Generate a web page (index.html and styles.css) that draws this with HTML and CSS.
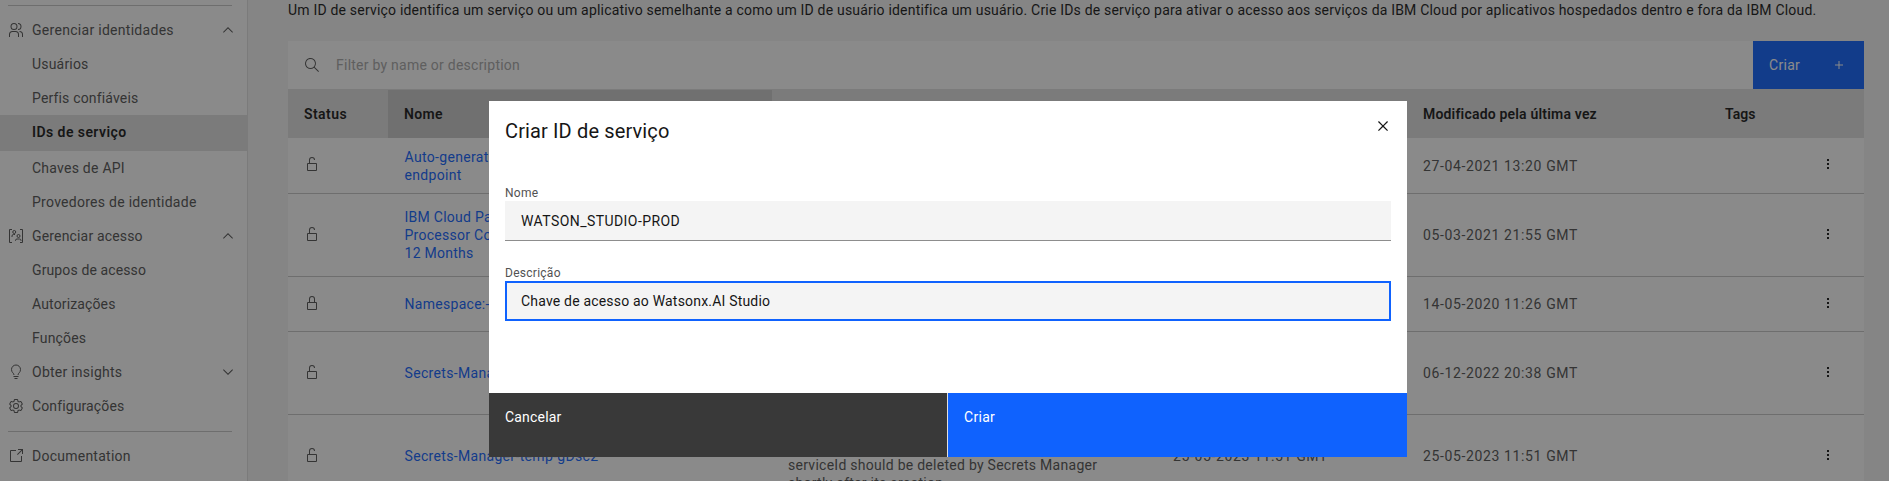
FILE: index.html
```html
<!DOCTYPE html>
<html lang="pt-BR">
<head>
<meta charset="utf-8">
<title>IDs de serviço</title>
<link rel="stylesheet" href="styles.css">
</head>
<body>
<svg class="defs" aria-hidden="true">
  <symbol id="users" viewBox="0 0 32 32"><path d="M30 30H28V25a5 5 0 0 0-5-5V18a7 7 0 0 1 7 7ZM22 30H20V25a5 5 0 0 0-5-5H9a5 5 0 0 0-5 5v5H2V25a7 7 0 0 1 7-7h6a7 7 0 0 1 7 7ZM20 2V4a5 5 0 0 1 0 10v2A7 7 0 0 0 20 2ZM12 4A5 5 0 1 1 7 9a5 5 0 0 1 5-5m0-2a7 7 0 1 0 7 7A7 7 0 0 0 12 2Z"/></symbol>
  <symbol id="access" viewBox="0 0 32 32"><path d="M8 3H3V29H8M24 3H29V29H24" fill="none" stroke="currentColor" stroke-width="2"/><circle cx="12.500" cy="8" r="3" fill="none" stroke="currentColor" stroke-width="2"/><circle cx="21" cy="16" r="3" fill="none" stroke="currentColor" stroke-width="2"/><path d="M8 18V16a3 3 0 0 1 3-3h3M15 26V25a3 3 0 0 1 3-3h5a3 3 0 0 1 3 3v1" fill="none" stroke="currentColor" stroke-width="2"/></symbol>
  <symbol id="bulb" viewBox="0 0 32 32"><path d="M11 24H21V26H11ZM13 28H19V30H13Z"/><path d="M12 22C12 18 7 17.500 7 11a9 9 0 0 1 18 0C25 17.500 20 18 20 22" fill="none" stroke="currentColor" stroke-width="2"/></symbol>
  <symbol id="gear" viewBox="0 0 32 32"><path d="M27,16.760c0-.25,0-.5,0-.76s0-.51,0-.77l1.920-1.680A2,2,0,0,0,29.300,11L26.940,7a2,2,0,0,0-1.730-1,2,2,0,0,0-.64.1l-2.430.82a11.350,11.350,0,0,0-1.310-.75l-.51-2.520a2,2,0,0,0-2-1.610H13.640a2,2,0,0,0-2,1.610l-.51,2.520a11.480,11.480,0,0,0-1.320.75L7.430,6.060A2,2,0,0,0,6.790,6,2,2,0,0,0,5.060,7L2.700,11a2,2,0,0,0,.41,2.510L5,15.240c0,.25,0,.5,0,.76s0,.51,0,.77L3.110,18.450A2,2,0,0,0,2.700,21L5.060,25a2,2,0,0,0,1.730,1,2,2,0,0,0,.64-.1l2.430-.82a11.350,11.350,0,0,0,1.310.75l.51,2.520a2,2,0,0,0,2,1.610h4.720a2,2,0,0,0,2-1.610l.51-2.520a11.480,11.480,0,0,0,1.320-.75l2.420.82a2,2,0,0,0,.64.1,2,2,0,0,0,1.730-1L29.300,21a2,2,0,0,0-.41-2.510ZM25.210,24l-3.430-1.160a8.860,8.860,0,0,1-2.710,1.570L18.360,28H13.640l-.71-3.550a9.360,9.360,0,0,1-2.700-1.570L6.790,24,4.430,20l2.720-2.400a8.900,8.900,0,0,1,0-3.130L4.430,12,6.790,8l3.430,1.160a8.860,8.860,0,0,1,2.710-1.570L13.640,4h4.720l.71,3.550a9.360,9.360,0,0,1,2.700,1.570L25.210,8,27.570,12l-2.720,2.400a8.900,8.900,0,0,1,0,3.130L27.570,20Z"/><path d="M16,22a6,6,0,1,1,6-6A5.940,5.940,0,0,1,16,22Zm0-10a3.910,3.910,0,0,0-4,4,3.910,3.910,0,0,0,4,4,3.910,3.910,0,0,0,4-4A3.910,3.910,0,0,0,16,12Z"/></symbol>
  <symbol id="launch" viewBox="0 0 32 32"><path d="M26 28H6a2 2 0 0 1-2-2V6A2 2 0 0 1 6 4H16V6H6V26H26V16h2V26A2 2 0 0 1 26 28ZM20 2V4H26.600L18 12.600 19.400 14 28 5.400V12H30V2Z"/></symbol>
  <symbol id="up" viewBox="0 0 16 16"><path d="M8 5 13 10 12.300 10.700 8 6.400 3.700 10.700 3 10Z"/></symbol>
  <symbol id="down" viewBox="0 0 16 16"><path d="M8 11 3 6 3.700 5.300 8 9.600 12.300 5.300 13 6Z"/></symbol>
  <symbol id="search" viewBox="0 0 16 16"><path d="M15 14.300 10.700 10c1.900-2.300 1.600-5.800-.7-7.700S4.200.7 2.300 3 .7 8.800 3 10.700c2 1.700 5 1.700 7 0l4.300 4.300ZM2 6.500C2 4 4 2 6.500 2S11 4 11 6.500 9 11 6.500 11 2 9 2 6.500Z"/></symbol>
  <symbol id="unlocked" viewBox="0 0 32 32"><path d="M24 14H12V8a4 4 0 0 1 8 0h2A6 6 0 0 0 10 8v6H8a2 2 0 0 0-2 2V28a2 2 0 0 0 2 2H24a2 2 0 0 0 2-2V16A2 2 0 0 0 24 14Zm0 14H8V16H24Z"/></symbol>
  <symbol id="locked" viewBox="0 0 32 32"><path d="M24 14H22V8A6 6 0 0 0 10 8v6H8a2 2 0 0 0-2 2V28a2 2 0 0 0 2 2H24a2 2 0 0 0 2-2V16A2 2 0 0 0 24 14ZM12 8a4 4 0 0 1 8 0v6H12ZM24 28H8V16H24Z"/></symbol>
  <symbol id="plus" viewBox="0 0 16 16"><path d="M7.500 4h1v3.500H12v1H8.500V12h-1V8.500H4v-1h3.500Z"/></symbol>
  <symbol id="dots" viewBox="0 0 16 16"><path d="M7 3h2v2H7ZM7 7h2v2H7ZM7 11h2v2H7Z"/></symbol>
  <symbol id="close" viewBox="0 0 32 32"><path d="M24 9.400 22.600 8 16 14.600 9.400 8 8 9.400 14.600 16 8 22.600 9.400 24 16 17.400 22.600 24 24 22.600 17.400 16Z"/></symbol>
</svg>

<div class="shell">
  <nav class="side">
    <hr class="rule">
    <div class="item head"><svg class="ic"><use href="#users"/></svg><span class="ls29">Gerenciar identidades</span><svg class="ic chev"><use href="#up"/></svg></div>
    <div class="item ls19">Usuários</div>
    <div class="item ls16">Perfis confiáveis</div>
    <div class="item active ls43">IDs de serviço</div>
    <div class="item ls24">Chaves de API</div>
    <div class="item ls27">Provedores de identidade</div>
    <div class="item head"><svg class="ic"><use href="#access"/></svg><span class="ls16">Gerenciar acesso</span><svg class="ic chev"><use href="#up"/></svg></div>
    <div class="item ls12">Grupos de acesso</div>
    <div class="item ls14">Autorizações</div>
    <div class="item ls16">Funções</div>
    <div class="item head"><svg class="ic"><use href="#bulb"/></svg><span class="ls24">Obter insights</span><svg class="ic chev"><use href="#down"/></svg></div>
    <div class="item head"><svg class="ic"><use href="#gear"/></svg><span class="ls12">Configurações</span></div>
    <hr class="rule">
    <div class="item head"><svg class="ic"><use href="#launch"/></svg><span class="ls24">Documentation</span></div>
  </nav>

  <main class="main">
    <p class="intro">Um ID de serviço identifica um serviço ou um aplicativo semelhante a como um ID de usuário identifica um usuário. Crie IDs de serviço para ativar o acesso aos serviços da IBM Cloud por aplicativos hospedados dentro e fora da IBM Cloud.</p>
    <div class="toolbar">
      <svg class="ic"><use href="#search"/></svg>
      <span class="filter ls24">Filter by name or description</span>
      <div class="create"><span class="ls29">Criar</span><svg class="ic"><use href="#plus"/></svg></div>
    </div>
    <div class="row thead">
      <div class="cell ls43">Status</div><div class="cell sorted ls33">Nome</div><div class="cell"></div><div class="cell"></div><div class="cell ls19">Modificado pela última vez</div><div class="cell ls5">Tags</div><div class="cell"></div>
    </div>
    <div class="row short">
      <div class="cell"><svg class="ic lock"><use href="#unlocked"/></svg></div><div class="cell link ls33">Auto-generated for<br>endpoint</div><div class="cell"></div><div class="cell"></div><div class="cell date">27-04-2021 13:20 GMT</div><div class="cell"></div><div class="cell"><svg class="ic menu"><use href="#dots"/></svg></div>
    </div>
    <div class="row tall">
      <div class="cell"><svg class="ic lock"><use href="#unlocked"/></svg></div><div class="cell link ls27">IBM Cloud Pak<br>Processor Core<br>12 Months</div><div class="cell"></div><div class="cell"></div><div class="cell date">05-03-2021 21:55 GMT</div><div class="cell"></div><div class="cell"><svg class="ic menu"><use href="#dots"/></svg></div>
    </div>
    <div class="row mid">
      <div class="cell"><svg class="ic lock"><use href="#locked"/></svg></div><div class="cell link ls29">Namespace:-</div><div class="cell"></div><div class="cell"></div><div class="cell date">14-05-2020 11:26 GMT</div><div class="cell"></div><div class="cell"><svg class="ic menu"><use href="#dots"/></svg></div>
    </div>
    <div class="row tall">
      <div class="cell"><svg class="ic lock"><use href="#unlocked"/></svg></div><div class="cell link ls33">Secrets-Manager</div><div class="cell"></div><div class="cell"></div><div class="cell date">06-12-2022 20:38 GMT</div><div class="cell"></div><div class="cell"><svg class="ic menu"><use href="#dots"/></svg></div>
    </div>
    <div class="row tall">
      <div class="cell"><svg class="ic lock"><use href="#unlocked"/></svg></div><div class="cell link ls33">Secrets-Manager-temp-gDsc2</div><div class="cell ls27">Temporary serviceId<br>created by Secrets Manager. This<br>serviceId should be deleted by Secrets Manager<br>shortly after its creation</div><div class="cell date">25-05-2023 11:51 GMT</div><div class="cell date">25-05-2023 11:51 GMT</div><div class="cell"></div><div class="cell"><svg class="ic menu"><use href="#dots"/></svg></div>
    </div>
  </main>
</div>

<div class="overlay">
  <section class="modal">
    <header class="modal-head"><h2 class="title">Criar ID de serviço</h2><svg class="close"><use href="#close"/></svg></header>
    <div class="form">
      <label class="label">Nome</label>
      <div class="input ls43">WATSON_STUDIO-PROD</div>
      <label class="label">Descrição</label>
      <div class="input focus ls19">Chave de acesso ao Watsonx.AI Studio</div>
    </div>
    <footer class="buttons"><div class="btn ls19">Cancelar</div><div class="btn primary ls29">Criar</div></footer>
  </section>
</div>
</body>
</html>
```
FILE: styles.css
```css
* { box-sizing: border-box; }
html, body { height: 100%; }
body {
  margin: 0;
  overflow: hidden;
  background: #f4f4f4;
  color: #525252;
  font: 14px/18px Roboto, "Liberation Sans", sans-serif;
}
.defs { display: none; }
.ic { width: 16px; height: 16px; flex: none; fill: currentColor; }

.ls5 { letter-spacing: 0.05px; }
.ls12 { letter-spacing: 0.12px; }
.ls14 { letter-spacing: 0.14px; }
.ls16 { letter-spacing: 0.165px; }
.ls19 { letter-spacing: 0.19px; }
.ls24 { letter-spacing: 0.245px; }
.ls27 { letter-spacing: 0.27px; }
.ls29 { letter-spacing: 0.29px; }
.ls33 { letter-spacing: 0.33px; }
.ls43 { letter-spacing: 0.435px; }

.shell { display: flex; height: 481px; overflow: hidden; }

/* Side navigation */
.side {
  width: 248px;
  flex: none;
  padding-top: 5px;
  background: #fff;
  border-right: 1px solid #e0e0e0;
}
.rule { height: 1px; margin: 0 15px 7px 8px; border: 0; background: #c6c6c6; }
.item + .rule { margin-top: 8px; }
.item { display: flex; align-items: center; height: 34px; padding-left: 32px; }
.item.head { gap: 8px; padding: 0 11px 0 8px; }
.item.active { height: 36px; padding-bottom: 2px; background: #e0e0e0; color: #161616; font-weight: 600; }
.chev { margin-left: auto; }

/* Service ID table */
.main { flex: 1; padding: 0 25px 0 40px; }
.intro { height: 41px; margin: 0; padding-top: 1px; color: #161616; letter-spacing: 0.195px; white-space: nowrap; }
.toolbar { display: flex; align-items: center; height: 48px; padding-left: 16px; background: #fff; }
.filter { margin-left: 16px; color: #a8a8a8; }
.create {
  display: flex;
  align-items: center;
  justify-content: space-between;
  width: 111px;
  height: 48px;
  margin-left: auto;
  padding: 0 17px 0 16px;
  background: #0f62fe;
  color: #fff;
}
.row {
  display: grid;
  grid-template-columns: 100px 384px 385px 250px 302px 99px 56px;
  background: #fff;
  border-bottom: 1px solid #c6c6c6;
}
.cell { display: flex; align-items: center; padding-left: 16px; white-space: nowrap; }
.thead { height: 49px; padding-top: 1px; background: #e0e0e0; border: 0; color: #161616; font-weight: 600; }
.sorted { background: #cacaca; }
.short { height: 56px; }
.mid { height: 55px; }
.tall { height: 83px; }
.lock { margin-bottom: 3px; }
.menu { margin: 0 0 3px -4px; color: #161616; }
.cell.link { padding-left: 16.5px; color: #0f62fe; }
.date { letter-spacing: 0.63px; }

/* Dialog */
.overlay {
  position: absolute;
  inset: 0;
  padding: 101px 0 0 489px;
  background: rgba(22, 22, 22, 0.5);
}
.modal { display: flex; flex-direction: column; width: 918px; height: 356px; background: #fff; color: #161616; }
.modal-head { display: flex; justify-content: space-between; height: 84px; padding: 16px 14px 0 16px; }
.title { margin: 0; font-size: 20px; line-height: 28px; font-weight: 400; letter-spacing: 0.13px; }
.close { width: 20px; height: 20px; margin-top: -1px; fill: #161616; }
.form { flex: 1; padding: 0 16px; }
.label { display: block; height: 16px; color: #525252; font-size: 12px; line-height: 16px; letter-spacing: 0.27px; }
.input {
  display: flex;
  align-items: center;
  height: 40px;
  margin-bottom: 24px;
  padding-left: 16px;
  background: #f4f4f4;
  border-bottom: 1px solid #8d8d8d;
}
.input.focus { border: 2px solid #0f62fe; padding-left: 14px; }
.buttons { display: flex; height: 64px; background: #e0e0e0; gap: 1px; }
.btn { width: 458px; padding: 15px 16px; background: #393939; color: #fff; }
.btn.primary { width: 459px; background: #0f62fe; }
```
